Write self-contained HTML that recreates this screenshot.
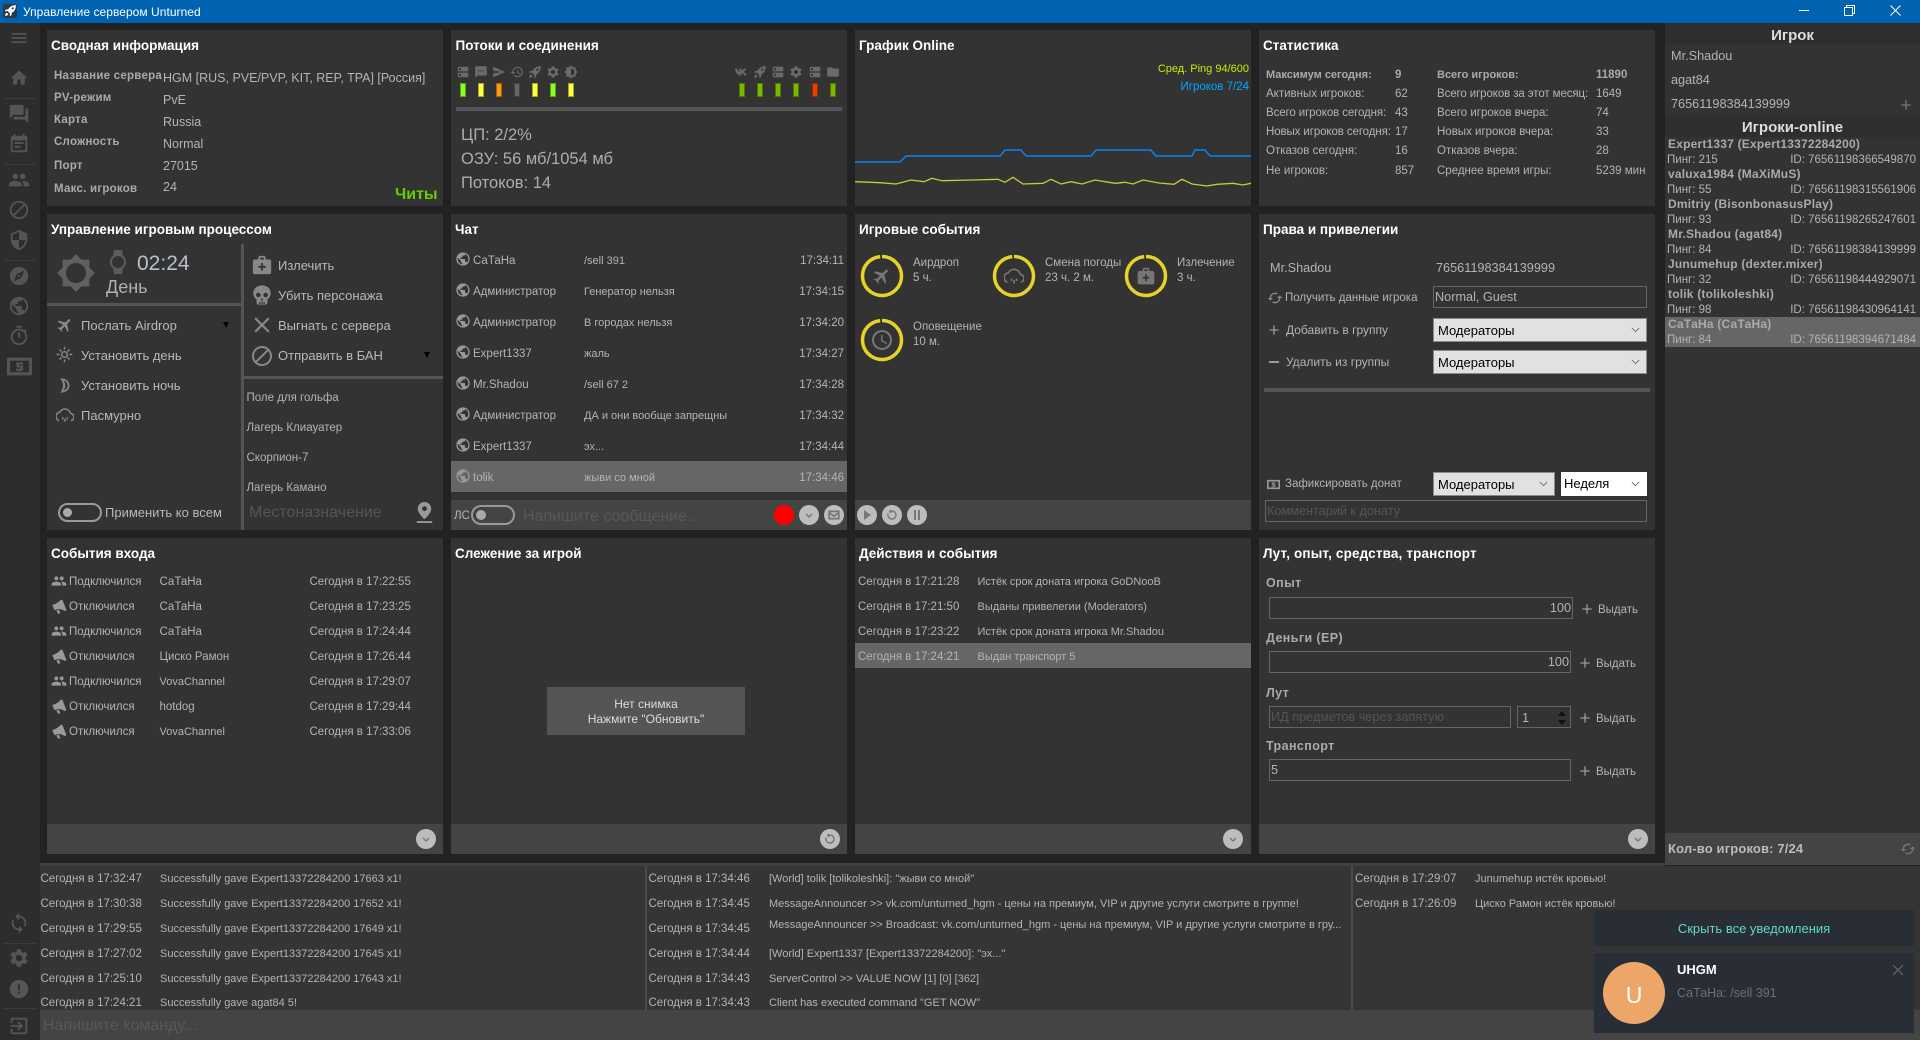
<!DOCTYPE html>
<html lang="ru"><head><meta charset="utf-8"><title>Управление сервером Unturned</title>
<style>
html,body{margin:0;padding:0;width:1920px;height:1040px;overflow:hidden;background:#222;font-family:"Liberation Sans","Noto Sans CJK SC",sans-serif;color:#b4b4b4}
p{position:absolute;margin:0;white-space:nowrap;line-height:16px;font-size:12px}
.b,.box,.i,.c{position:absolute}
.box{box-sizing:border-box}
.pn{position:absolute;background:#333}
.ti{font-size:13.5px;font-weight:bold;color:#fff}
.lb{font-weight:bold;font-size:11.5px;color:#aaa;letter-spacing:.25px}
.lb2{font-weight:bold;font-size:12.5px;color:#aaa;letter-spacing:.4px}
.v{font-size:12.7px;color:#b4b4b4}
.v2{font-size:12.5px;color:#b4b4b4}
.m{font-size:13px;color:#b8b8b8}
.s{font-size:11.5px;margin-top:1px}
.q{font-size:11px;margin-top:1px}
.lg .s{margin-top:0}
.lg .q{margin-top:0}
.inp{position:absolute;box-sizing:border-box;border:1px solid #666;height:22px}
.sel{position:absolute;box-sizing:border-box;background:#e1e1e1;border:1px solid #8a8a8a;height:24px;color:#000;font-size:13px;line-height:24px;padding-left:4px}
.sel svg{position:absolute;right:6px;top:8px;width:9px;height:6px;fill:none;stroke:#666;stroke-width:1}
.i{fill:#6a6a6a}
.sb{fill:#555}
.g{fill:#999}
.led{position:absolute;width:6px;height:14px;box-sizing:border-box;top:83px;border:1px solid rgba(0,0,0,.35)}
.ft{position:absolute;background:#444;height:30px}
.c{width:20px;height:20px;border-radius:50%;background:#bdbdbd;top:829px}
.c svg{position:absolute;left:5px;top:5px;width:10px;height:10px;fill:none;stroke:#777;stroke-width:1.4}
.sep{position:absolute;background:#555}
.sbs{position:absolute;left:5px;width:30px;height:1px;background:#3d3d3d}
.t14{width:14px;height:14px;top:65px}
</style></head><body>
<svg width="0" height="0" style="position:absolute"><defs>
<symbol id="menu" viewBox="0 0 24 24"><path d="M3 18h18v-2H3v2zm0-5h18v-2H3v2zm0-7v2h18V6H3z"/></symbol>
<symbol id="home" viewBox="0 0 24 24"><path d="M10 20v-6h4v6h5v-8h3L12 3 2 12h3v8z"/></symbol>
<symbol id="forum" viewBox="0 0 24 24"><path d="M21 6h-2v9H6v2c0 .55.45 1 1 1h11l4 4V7c0-.55-.45-1-1-1zm-4 6V3c0-.55-.45-1-1-1H3c-.55 0-1 .45-1 1v14l4-4h10c.55 0 1-.45 1-1z"/></symbol>
<symbol id="note" viewBox="0 0 24 24"><path d="M17 10H7v2h10v-2zm2-7h-1V1h-2v2H8V1H6v2H5c-1.11 0-2 .9-2 2v14c0 1.1.89 2 2 2h14c1.1 0 2-.9 2-2V5c0-1.1-.9-2-2-2zm0 16H5V8h14v11zm-5-5H7v2h7v-2z"/></symbol>
<symbol id="people" viewBox="0 0 24 24"><path d="M16 11c1.66 0 2.99-1.34 2.99-3S17.66 5 16 5c-1.66 0-3 1.34-3 3s1.34 3 3 3zm-8 0c1.66 0 2.99-1.34 2.99-3S9.66 5 8 5C6.34 5 5 6.34 5 8s1.34 3 3 3zm0 2c-2.33 0-7 1.17-7 3.5V19h14v-2.5c0-2.33-4.67-3.5-7-3.5zm8 0c-.29 0-.62.02-.97.05 1.16.84 1.97 1.97 1.97 3.45V19h6v-2.5c0-2.33-4.67-3.5-7-3.5z"/></symbol>
<symbol id="block" viewBox="0 0 24 24"><path d="M12 2C6.48 2 2 6.48 2 12s4.48 10 10 10 10-4.48 10-10S17.52 2 12 2zM4 12c0-4.42 3.58-8 8-8 1.85 0 3.55.63 4.9 1.69L5.69 16.9C4.63 15.55 4 13.85 4 12zm8 8c-1.85 0-3.55-.63-4.9-1.69L18.31 7.1C19.37 8.45 20 10.15 20 12c0 4.42-3.58 8-8 8z"/></symbol>
<symbol id="shield" viewBox="0 0 24 24"><path d="M12 1L3 5v6c0 5.55 3.84 10.74 9 12 5.16-1.26 9-6.45 9-12V5l-9-4zm0 10.99h7c-.53 4.12-3.28 7.79-7 8.94V12H5V6.3l7-3.11v8.8z"/></symbol>
<symbol id="explore" viewBox="0 0 24 24"><path d="M12 10.9c-.61 0-1.1.49-1.1 1.1s.49 1.1 1.1 1.1c.61 0 1.1-.49 1.1-1.1s-.49-1.1-1.1-1.1zM12 2C6.48 2 2 6.48 2 12s4.48 10 10 10 10-4.48 10-10S17.52 2 12 2zm2.19 12.19L6 18l3.81-8.19L18 6l-3.81 8.19z"/></symbol>
<symbol id="globe" viewBox="0 0 24 24"><path d="M12 2C6.48 2 2 6.48 2 12s4.48 10 10 10 10-4.48 10-10S17.52 2 12 2zm-1 17.93c-3.95-.49-7-3.85-7-7.93 0-.62.08-1.21.21-1.79L9 15v1c0 1.1.9 2 2 2v1.93zm6.9-2.54c-.26-.81-1-1.39-1.9-1.39h-1v-3c0-.55-.45-1-1-1H8v-2h2c.55 0 1-.45 1-1V7h2c1.1 0 2-.9 2-2v-.41c2.93 1.19 5 4.06 5 7.41 0 2.08-.8 3.97-2.1 5.39z"/></symbol>
<symbol id="timer" viewBox="0 0 24 24"><path d="M15 1H9v2h6V1zm-4 13h2V8h-2v6zm8.03-6.61l1.42-1.42c-.43-.51-.9-.99-1.41-1.41l-1.42 1.42C16.07 4.74 14.12 4 12 4c-4.97 0-9 4.03-9 9s4.02 9 9 9 9-4.03 9-9c0-2.12-.74-4.07-1.97-5.61zM12 20c-3.87 0-7-3.13-7-7s3.13-7 7-7 7 3.13 7 7-3.13 7-7 7z"/></symbol>
<symbol id="gear" viewBox="0 0 24 24"><path d="M19.14 12.94c.04-.3.06-.61.06-.94 0-.32-.02-.64-.07-.94l2.03-1.58c.18-.14.23-.41.12-.61l-1.92-3.32c-.12-.22-.37-.29-.59-.22l-2.39.96c-.5-.38-1.03-.7-1.62-.94l-.36-2.54c-.04-.24-.24-.41-.48-.41h-3.84c-.24 0-.43.17-.47.41l-.36 2.54c-.59.24-1.13.57-1.62.94l-2.39-.96c-.22-.08-.47 0-.59.22L2.74 8.87c-.12.21-.08.47.12.61l2.03 1.58c-.05.3-.09.63-.09.94s.02.64.07.94l-2.03 1.58c-.18.14-.23.41-.12.61l1.92 3.32c.12.22.37.29.59.22l2.39-.96c.5.38 1.03.7 1.62.94l.36 2.54c.05.24.24.41.48.41h3.84c.24 0 .44-.17.47-.41l.36-2.54c.59-.24 1.13-.56 1.62-.94l2.39.96c.22.08.47 0 .59-.22l1.92-3.32c.12-.22.07-.47-.12-.61l-2.01-1.58zM12 15.6c-1.98 0-3.6-1.62-3.6-3.6s1.62-3.6 3.6-3.6 3.6 1.62 3.6 3.6-1.62 3.6-3.6 3.6z"/></symbol>
<symbol id="flight" viewBox="0 0 24 24"><path transform="rotate(45 12 12)" d="M21 16v-2l-8-5V3.5c0-.83-.67-1.5-1.5-1.5S10 2.67 10 3.5V9l-8 5v2l8-2.5V19l-2 1.5V22l3.5-1 3.5 1v-1.5L13 19v-5.5l8 2.5z"/></symbol>
<symbol id="rocket" viewBox="0 0 24 24"><path d="M22 2c-7 0-11.5 3-14 7.5l-5 1-1.5 3 5-.5 4.5 4.500-.5 5 3-1.500 1-5C19 14 22 9 22 2zM16 6a2 2 0 110 4 2 2 0 010-4zM5 16c-2 1-3 3-3 6 3 0 5-1 6-3z"/></symbol>
<symbol id="send" viewBox="0 0 24 24"><path d="M2.010 21L23 12 2.010 3 2 10l15 2-15 2z"/></symbol>
<symbol id="sms" viewBox="0 0 24 24"><path d="M20 2H4c-1.100 0-1.990.9-1.990 2L2 22l4-4h14c1.100 0 2-.9 2-2V4c0-1.100-.9-2-2-2zM9 11H7V9h2v2zm4 0h-2V9h2v2zm4 0h-2V9h2v2z"/></symbol>
<symbol id="dns" viewBox="0 0 24 24"><path d="M20 13H4c-.55 0-1 .45-1 1v6c0 .55.45 1 1 1h16c.55 0 1-.45 1-1v-6c0-.55-.45-1-1-1zM7 19c-1.100 0-2-.9-2-2s.9-2 2-2 2 .9 2 2-.9 2-2 2zM20 3H4c-.55 0-1 .45-1 1v6c0 .55.45 1 1 1h16c.55 0 1-.45 1-1V4c0-.55-.45-1-1-1zM7 9c-1.100 0-2-.9-2-2s.9-2 2-2 2 .9 2 2-.9 2-2 2z"/></symbol>
<symbol id="hist" viewBox="0 0 24 24"><path d="M13 3c-4.970 0-9 4.030-9 9H1l3.890 3.890.07.14L9 12H6c0-3.870 3.130-7 7-7s7 3.130 7 7-3.130 7-7 7c-1.930 0-3.680-.79-4.940-2.060l-1.420 1.420C8.270 19.990 10.510 21 13 21c4.970 0 9-4.030 9-9s-4.030-9-9-9zm-1 5v5l4.280 2.540.72-1.210-3.500-2.080V8H12z"/></symbol>
<symbol id="half" viewBox="0 0 24 24"><path d="M20 8.690V4h-4.690L12 .69 8.690 4H4v4.690L.69 12 4 15.310V20h4.690L12 23.310 15.310 20H20v-4.690L23.310 12 20 8.690zM12 18V6c3.310 0 6 2.690 6 6s-2.690 6-6 6z"/></symbol>
<symbol id="sun" viewBox="0 0 24 24"><path d="M20 15.310L23.310 12 20 8.690V4h-4.690L12 .69 8.690 4H4v4.690L.69 12 4 15.310V20h4.690L12 23.310 15.310 20H20v-4.690zM12 18c-3.310 0-6-2.690-6-6s2.690-6 6-6 6 2.690 6 6-2.690 6-6 6z"/></symbol>
<symbol id="watch" viewBox="0 0 24 24"><path d="M20 12c0-2.540-1.190-4.810-3.040-6.270L16 0H8l-.95 5.730C5.190 7.190 4 9.450 4 12s1.190 4.810 3.050 6.270L8 24h8l.96-5.730C18.810 16.810 20 14.540 20 12zM6 12c0-3.310 2.690-6 6-6s6 2.690 6 6-2.690 6-6 6-6-2.690-6-6z"/></symbol>
<symbol id="med" viewBox="0 0 24 24"><path d="M20 6h-4V4c0-1.100-.9-2-2-2h-4c-1.100 0-2 .9-2 2v2H4c-1.100 0-2 .9-2 2v12c0 1.100.9 2 2 2h16c1.100 0 2-.9 2-2V8c0-1.100-.9-2-2-2zM10 4h4v2h-4V4zm6 11h-3v3h-2v-3H8v-2h3v-3h2v3h3v2z"/></symbol>
<symbol id="skull" viewBox="0 0 24 24"><path fill-rule="evenodd" d="M12 1.500C6.500 1.500 2.500 5 2.500 10c0 3 1.300 5.300 3.500 6.700V20c0 1.300 1 2.500 2.300 2.500h7.400c1.300 0 2.300-1.200 2.300-2.500v-3.300c2.200-1.400 3.500-3.700 3.500-6.700 0-5-4-8.500-9.500-8.500zM8 9.500a2.500 2.500 0 110 5 2.500 2.500 0 010-5zm8 0a2.500 2.500 0 110 5 2.500 2.500 0 010-5zM12 15l1.500 3h-3zM9 19.500h1.300V22H9zm2.300 0h1.400V22h-1.400zm2.400 0H15V22h-1.300z"/></symbol>
<symbol id="x" viewBox="0 0 24 24"><path d="M19 6.410L17.590 5 12 10.590 6.410 5 5 6.410 10.590 12 5 17.590 6.410 19 12 13.410 17.590 19 19 17.590 13.410 12z"/></symbol>
<symbol id="brsun" viewBox="0 0 24 24"><path d="M12 7a5 5 0 100 10 5 5 0 000-10zm0 2a3 3 0 110 6 3 3 0 010-6zM11 1h2v4h-2zM11 19h2v4h-2zM1 11h4v2H1zM19 11h4v2h-4zM4.200 5.600l1.400-1.400 2.800 2.800-1.400 1.400zM15.600 17l1.400-1.400 2.800 2.800-1.400 1.400zM4.200 18.400L7 15.600 8.400 17l-2.800 2.800zM15.600 7l2.800-2.800 1.400 1.400L17 8.400z"/></symbol>
<symbol id="moon" viewBox="0 0 24 24"><path fill-rule="evenodd" d="M6 2c8 0 13 4 13 10s-5 10-13 10c2.500-3 4-6.500 4-10S8.500 5 6 2zm4.500 3c1.600 2 2.500 4.500 2.500 7s-.9 5-2.500 7c3.800-.8 6-3.600 6-7s-2.200-6.200-6-7z"/></symbol>
<symbol id="cloud" viewBox="0 0 24 24"><path fill="none" stroke-width="2" d="M19.350 10.040C18.670 6.590 15.640 4 12 4 9.110 4 6.600 5.640 5.350 8.040 2.340 8.360 0 10.910 0 14c0 2.500 1.500 4.500 4 5.500M20 19.500c2.500-.8 4-2.500 4-4.500 0-2.640-2.050-4.780-4.650-4.960" stroke="currentColor"/><path d="M8 15h2v3H8zM11 17h2v4h-2zM14 15h2v3h-2z"/></symbol>
<symbol id="pin" viewBox="0 0 24 24"><path d="M12 1C8.130 1 5 4.130 5 8c0 5.250 7 11 7 11s7-5.750 7-11c0-3.870-3.130-7-7-7zm0 9.500c-1.380 0-2.500-1.120-2.500-2.500s1.120-2.500 2.500-2.500 2.500 1.120 2.500 2.500-1.120 2.500-2.500 2.500zM4 21h16v2H4z"/></symbol>
<symbol id="mega" viewBox="0 0 24 24"><path d="M15.500 1l1.500 1 6 15.500-1 1.500-2.500-.2c-4-2.800-9-3.300-13-1.800l-2.500 1-3.500-8 2-1c4-1.500 9-4.500 11-7.500zM7 18.500l4-1.500 2.300 5.500-3.300 1.300z"/></symbol>
<symbol id="cached" viewBox="0 0 24 24"><path d="M19 8l-4 4h3c0 3.310-2.690 6-6 6-1.010 0-1.970-.25-2.800-.7l-1.460 1.460C8.970 19.540 10.430 20 12 20c4.420 0 8-3.580 8-8h3l-4-4zM6 12c0-3.310 2.690-6 6-6 1.010 0 1.970.25 2.800.7l1.460-1.460C15.030 4.460 13.570 4 12 4c-4.420 0-8 3.580-8 8H1l4 4 4-4H6z"/></symbol>
<symbol id="sync" viewBox="0 0 24 24"><path d="M12 4V1L8 5l4 4V6c3.310 0 6 2.690 6 6 0 1.010-.25 1.970-.7 2.800l1.460 1.460C19.540 15.030 20 13.570 20 12c0-4.420-3.580-8-8-8zm0 14c-3.310 0-6-2.690-6-6 0-1.010.25-1.970.7-2.800L5.240 7.740C4.460 8.970 4 10.430 4 12c0 4.420 3.580 8 8 8v3l4-4-4-4v3z"/></symbol>
<symbol id="err" viewBox="0 0 24 24"><path d="M12 2C6.480 2 2 6.480 2 12s4.480 10 10 10 10-4.480 10-10S17.520 2 12 2zm1 15h-2v-2h2v2zm0-4h-2V7h2v6z"/></symbol>
<symbol id="exit" viewBox="0 0 24 24"><path d="M10.090 15.590L11.500 17l5-5-5-5-1.410 1.410L12.670 11H3v2h9.670l-2.580 2.590zM19 3H5c-1.110 0-2 .9-2 2v4h2V5h14v14H5v-4H3v4c0 1.100.89 2 2 2h14c1.100 0 2-.9 2-2V5c0-1.100-.9-2-2-2z"/></symbol>
<symbol id="vk" viewBox="0 0 24 24"><path d="M0 6h4c.6 3.500 2 5.500 3.500 6V6h3.500v4c1.400-.3 3-2 4-4h3.700c-.7 2.500-2.300 4.500-3.700 5.600 1.500.9 3.500 2.900 4.600 6.400h-4c-.8-2.400-2.600-4-4.600-4.300V18h-1C5 18 1 13.500 0 6z"/></symbol>
<symbol id="folder" viewBox="0 0 24 24"><path d="M10 4H4c-1.100 0-1.990.9-1.990 2L2 18c0 1.100.9 2 2 2h16c1.100 0 2-.9 2-2V8c0-1.100-.9-2-2-2h-8l-2-2z"/></symbol>
<symbol id="clock" viewBox="0 0 24 24"><path d="M11.990 2C6.470 2 2 6.480 2 12s4.470 10 9.990 10C17.520 22 22 17.520 22 12S17.520 2 11.990 2zM12 20c-4.420 0-8-3.580-8-8s3.580-8 8-8 8 3.580 8 8-3.580 8-8 8zm.5-13H11v6l5.250 3.150.75-1.230-4.500-2.670z"/></symbol>
<symbol id="plus" viewBox="0 0 24 24"><path d="M19 13h-6v6h-2v-6H5v-2h6V5h2v6h6v2z"/></symbol>
<symbol id="money" viewBox="0 0 24 24"><path fill-rule="evenodd" d="M1 3.500c-.6 0-1 .4-1 1v15c0 .6.4 1 1 1h22c.6 0 1-.4 1-1v-15c0-.6-.4-1-1-1zM3 6.500h18v11H3zM9 8h6.500v2H11.500v1.200h4V16H12.700v1.200h-1.500V16H8.500v-2h4.500v-1.200H9z"/></symbol>
</defs></svg>

<!-- title bar -->
<div class="b" style="left:0;top:0;width:1920px;height:23px;background:#0063b1"></div>
<div class="b" style="left:3px;top:4px;width:14px;height:14px;background:#2a3a48;border-radius:2px"></div>
<svg class="i" style="left:4px;top:4px;width:13px;height:13px;fill:#fff"><use href="#rocket"/></svg>
<p style="left:23px;top:4px;font-size:12px;color:#fff;letter-spacing:.04px">Управление сервером Unturned</p>
<div class="b" style="left:1799px;top:10px;width:10px;height:1px;background:#fff"></div>
<svg class="b" style="left:1844px;top:5px" width="11" height="11" fill="none" stroke="#fff"><path d="M.5 2.500h8v8h-8zM2.500 2.500v-2h8v8h-2"/></svg>
<svg class="b" style="left:1890px;top:5px" width="11" height="11" stroke="#fff"><path d="M.5.5l10 10M10.500.5l-10 10"/></svg>

<!-- sidebar -->
<div class="b" style="left:0;top:23px;width:40px;height:1017px;background:#2d2d2d"></div>
<svg class="i sb" style="left:9px;top:28px;width:20px;height:20px"><use href="#menu"/></svg>
<svg class="i sb" style="left:9px;top:68px;width:20px;height:20px"><use href="#home"/></svg>
<div class="sbs" style="top:98px"></div>
<svg class="i sb" style="left:8px;top:103px;width:22px;height:22px"><use href="#forum"/></svg>
<svg class="i sb" style="left:8px;top:133px;width:22px;height:22px"><use href="#note"/></svg>
<div class="sbs" style="top:164px"></div>
<svg class="i sb" style="left:8px;top:169px;width:22px;height:22px"><use href="#people"/></svg>
<svg class="i sb" style="left:8px;top:199px;width:22px;height:22px"><use href="#block"/></svg>
<svg class="i sb" style="left:8px;top:229px;width:22px;height:22px"><use href="#shield"/></svg>
<div class="sbs" style="top:260px"></div>
<svg class="i sb" style="left:8px;top:265px;width:22px;height:22px"><use href="#explore"/></svg>
<svg class="i sb" style="left:8px;top:295px;width:22px;height:22px"><use href="#globe"/></svg>
<svg class="i sb" style="left:8px;top:325px;width:22px;height:22px"><use href="#timer"/></svg>
<svg class="i sb" style="left:7px;top:354px;width:25px;height:25px"><use href="#money"/></svg>
<svg class="i sb" style="left:8px;top:912px;width:22px;height:22px"><use href="#sync"/></svg>
<div class="sbs" style="top:943px"></div>
<svg class="i sb" style="left:8px;top:947px;width:22px;height:22px"><use href="#gear"/></svg>
<svg class="i sb" style="left:8px;top:978px;width:22px;height:22px"><use href="#err"/></svg>
<div class="sbs" style="top:1008px"></div>
<svg class="i sb" style="left:8px;top:1015px;width:22px;height:22px"><use href="#exit"/></svg>

<!-- panels -->
<div class="pn" style="left:47px;top:30px;width:396px;height:176px"></div>
<div class="pn" style="left:451px;top:30px;width:396px;height:176px"></div>
<div class="pn" style="left:855px;top:30px;width:396px;height:176px"></div>
<div class="pn" style="left:1259px;top:30px;width:396px;height:176px"></div>
<div class="pn" style="left:47px;top:214px;width:396px;height:316px"></div>
<div class="pn" style="left:451px;top:214px;width:396px;height:316px"></div>
<div class="pn" style="left:855px;top:214px;width:396px;height:316px"></div>
<div class="pn" style="left:1259px;top:214px;width:396px;height:316px"></div>
<div class="pn" style="left:47px;top:538px;width:396px;height:316px"></div>
<div class="pn" style="left:451px;top:538px;width:396px;height:316px"></div>
<div class="pn" style="left:855px;top:538px;width:396px;height:316px"></div>
<div class="pn" style="left:1259px;top:538px;width:396px;height:316px"></div>

<!-- Summary -->
<p class="ti" style="left:51px;top:38px">Сводная информация</p>
<p class="lb" style="left:54px;top:68px">Название сервера</p><p class="v2" style="left:163px;top:70px">HGM [RUS, PVE/PVP, KIT, REP, TPA] [Россия]</p>
<p class="lb" style="left:54px;top:90px">PV-режим</p><p class="v2" style="left:163px;top:92px">PvE</p>
<p class="lb" style="left:54px;top:112px">Карта</p><p class="v2" style="left:163px;top:114px">Russia</p>
<p class="lb" style="left:54px;top:134px">Сложность</p><p class="v2" style="left:163px;top:136px">Normal</p>
<p class="lb" style="left:54px;top:158px">Порт</p><p class="v2" style="left:163px;top:158px">27015</p>
<p class="lb" style="left:54px;top:181px">Макс. игроков</p><p class="v2" style="left:163px;top:179px">24</p>
<p style="left:395px;top:187px;font-size:16px;font-weight:bold;color:#66cc00">Читы</p>

<!-- Threads -->
<p class="ti" style="left:455.500px;top:38px">Потоки и соединения</p>
<svg class="i t14" style="left:456px"><use href="#dns"/></svg>
<svg class="i t14" style="left:474px"><use href="#sms"/></svg>
<svg class="i t14" style="left:492px"><use href="#send"/></svg>
<svg class="i t14" style="left:510px"><use href="#hist"/></svg>
<svg class="i t14" style="left:528px"><use href="#rocket"/></svg>
<svg class="i t14" style="left:546px"><use href="#gear"/></svg>
<svg class="i t14" style="left:564px"><use href="#half"/></svg>
<svg class="i t14" style="left:735px"><use href="#vk"/></svg>
<svg class="i t14" style="left:753px"><use href="#rocket"/></svg>
<svg class="i t14" style="left:771px"><use href="#dns"/></svg>
<svg class="i t14" style="left:789px"><use href="#gear"/></svg>
<svg class="i t14" style="left:808px"><use href="#dns"/></svg>
<svg class="i t14" style="left:826px"><use href="#folder"/></svg>
<div class="led" style="left:460px;background:#88ff22"></div><div class="led" style="left:478px;background:#ffff44"></div><div class="led" style="left:496px;background:#ff9911"></div><div class="led" style="left:514px;background:#666"></div><div class="led" style="left:532px;background:#ffff44"></div><div class="led" style="left:550px;background:#88ff22"></div><div class="led" style="left:568px;background:#ffff44"></div>
<div class="led" style="left:739px;background:#7ab800"></div><div class="led" style="left:757px;background:#7ab800"></div><div class="led" style="left:775px;background:#7ab800"></div><div class="led" style="left:793px;background:#7ab800"></div><div class="led" style="left:812px;background:#e84000"></div><div class="led" style="left:830px;background:#7ab800"></div>
<div class="sep" style="left:456px;top:107px;width:386px;height:4px"></div>
<p style="left:461px;top:127px;font-size:16.500px;line-height:17px;color:#adadad">ЦП: 2/2%</p>
<p style="left:461px;top:151px;font-size:16.500px;line-height:17px;color:#adadad">ОЗУ: 56 мб/1054 мб</p>
<p style="left:461px;top:175px;font-size:16.500px;line-height:17px;color:#adadad">Потоков: 14</p>

<!-- Graph -->
<p class="ti" style="left:859px;top:38px">График Online</p>
<p style="right:671px;top:61px;font-size:11px;color:#c0f000">Сред. Ping 94/600</p>
<p style="right:671px;top:79px;font-size:11.5px;color:#00a8ff">Игроков 7/24</p>
<svg class="b" style="left:855px;top:130px" width="396" height="70" fill="none">
<path stroke="#0a82f5" stroke-width="1.500" d="M0 32H45L51 26H145L150 20H166L171 26H236L241 20H296L301 26H337L340 20H350L355 26H396"/>
<path stroke="#c9c93a" stroke-width="1.300" d="M0 51.700L25 52.700L41 54L56 50L69 51.700L77 48.300L87 50.700L117 50L143 49.300L150 52.300L158 47.300L168 54L188 53.300L196 49.300L206 54L216 51.700L227 54L240 50L260 53.300L270 52.300L278 54L288 50L304 53L319 54.300L327 49.300L337 54L352 56L362 54.300L378 53.300L388 55L396 53.300"/>
</svg>

<!-- Stats -->
<p class="ti" style="left:1263px;top:38px">Статистика</p>
<p class="s" style="left:1266px;top:66px;font-weight:bold;color:#aaa;font-size:11px">Максимум сегодня:</p><p class="s" style="left:1395px;top:66px;font-weight:bold;color:#aaa">9</p><p class="s" style="left:1437px;top:66px;font-weight:bold;color:#aaa;font-size:11px">Всего игроков:</p><p class="s" style="left:1596px;top:66px;font-weight:bold;color:#aaa">11890</p>
<p class="s" style="left:1266px;top:85px">Активных игроков:</p><p class="s" style="left:1395px;top:85px">62</p><p class="s" style="left:1437px;top:85px;letter-spacing:-.1px">Всего игроков за этот месяц:</p><p class="s" style="left:1596px;top:85px">1649</p>
<p class="s" style="left:1266px;top:104px;letter-spacing:-.1px">Всего игроков сегодня:</p><p class="s" style="left:1395px;top:104px">43</p><p class="s" style="left:1437px;top:104px">Всего игроков вчера:</p><p class="s" style="left:1596px;top:104px">74</p>
<p class="s" style="left:1266px;top:123px;letter-spacing:-.1px">Новых игроков сегодня:</p><p class="s" style="left:1395px;top:123px">17</p><p class="s" style="left:1437px;top:123px">Новых игроков вчера:</p><p class="s" style="left:1596px;top:123px">33</p>
<p class="s" style="left:1266px;top:142px">Отказов сегодня:</p><p class="s" style="left:1395px;top:142px">16</p><p class="s" style="left:1437px;top:142px">Отказов вчера:</p><p class="s" style="left:1596px;top:142px">28</p>
<p class="s" style="left:1266px;top:162px">Не игроков:</p><p class="s" style="left:1395px;top:162px">857</p><p class="s" style="left:1437px;top:162px">Среднее время игры:</p><p class="s" style="left:1596px;top:162px">5239 мин</p>

<!-- Game control -->
<p class="ti" style="left:51px;top:222px">Управление игровым процессом</p>
<div class="sep" style="left:241px;top:244px;width:3px;height:286px"></div>
<div class="sep" style="left:47px;top:303px;width:194px;height:3px"></div>
<div class="sep" style="left:244px;top:376px;width:199px;height:3px"></div>
<svg class="i" style="left:56px;top:253px;width:40px;height:40px;fill:#606060"><use href="#sun"/></svg>
<svg class="i" style="left:106px;top:250px;width:24px;height:24px;fill:#5c5c5c"><use href="#watch"/></svg>
<p style="left:137px;top:252px;font-size:21px;line-height:24px;color:#b8c0c8">02:24</p>
<p style="left:106px;top:277px;font-size:18px;line-height:20px;color:#b0b0b0">День</p>
<svg class="i" style="left:56px;top:316px;width:18px;height:18px;fill:#888"><use href="#flight"/></svg>
<svg class="i" style="left:56px;top:346px;width:17px;height:17px;fill:#888"><use href="#brsun"/></svg>
<svg class="i" style="left:56px;top:377px;width:17px;height:17px;fill:#888"><use href="#moon"/></svg>
<svg class="i" style="left:56px;top:406px;width:18px;height:18px;fill:#888;color:#888"><use href="#cloud"/></svg>
<p class="m" style="left:81px;top:318px">Послать Airdrop</p>
<p class="m" style="left:81px;top:348px">Установить день</p>
<p class="m" style="left:81px;top:378px">Установить ночь</p>
<p class="m" style="left:81px;top:408px">Пасмурно</p>
<div class="b" style="left:223px;top:322px;border-left:3.500px solid transparent;border-right:3.500px solid transparent;border-top:6px solid #000"></div>
<svg class="i" style="left:251px;top:254px;width:22px;height:22px;fill:#888"><use href="#med"/></svg>
<svg class="i" style="left:251px;top:284px;width:22px;height:22px;fill:#888"><use href="#skull"/></svg>
<svg class="i" style="left:249px;top:312px;width:26px;height:26px;fill:#888"><use href="#x"/></svg>
<svg class="i" style="left:250px;top:344px;width:24px;height:24px;fill:#888"><use href="#block"/></svg>
<p class="m" style="left:278px;top:258px">Излечить</p>
<p class="m" style="left:278px;top:288px">Убить персонажа</p>
<p class="m" style="left:278px;top:318px">Выгнать с сервера</p>
<p class="m" style="left:278px;top:348px">Отправить в БАН</p>
<div class="b" style="left:424px;top:352px;border-left:3.500px solid transparent;border-right:3.500px solid transparent;border-top:6px solid #000"></div>
<p class="s" style="left:246.500px;top:389px">Поле для гольфа</p>
<p class="s" style="left:246.500px;top:419px">Лагерь Клиауатер</p>
<p class="s" style="left:246.500px;top:449px">Скорпион-7</p>
<p class="s" style="left:246.500px;top:479px">Лагерь Камано</p>
<p style="left:249px;top:505px;font-size:16px;color:#555">Местоназначение</p>
<svg class="i" style="left:413px;top:501px;width:23px;height:23px;fill:#999"><use href="#pin"/></svg>
<div class="box" style="left:58px;top:503px;width:44px;height:19px;border:2px solid #999;border-radius:10px"></div>
<div class="b" style="left:63px;top:508px;width:9px;height:9px;border-radius:50%;background:#aaa"></div>
<p class="m" style="left:105px;top:505px">Применить ко всем</p>

<!-- Chat -->
<p class="ti" style="left:455px;top:222px">Чат</p>
<div class="b" style="left:451px;top:461px;width:396px;height:31px;background:#666"></div>
<svg class="i g" style="left:455px;top:251px;width:16px;height:16px"><use href="#globe"/></svg><p class="s" style="left:473px;top:252px">СаТаНа</p><p class="q" style="left:584px;top:252px">/sell 391</p><p class="s" style="right:1076px;top:252px">17:34:11</p>
<svg class="i g" style="left:455px;top:282px;width:16px;height:16px"><use href="#globe"/></svg><p class="s" style="left:473px;top:283px">Администратор</p><p class="q" style="left:584px;top:283px">Генератор нельзя</p><p class="s" style="right:1076px;top:283px">17:34:15</p>
<svg class="i g" style="left:455px;top:313px;width:16px;height:16px"><use href="#globe"/></svg><p class="s" style="left:473px;top:314px">Администратор</p><p class="q" style="left:584px;top:314px">В городах нельзя</p><p class="s" style="right:1076px;top:314px">17:34:20</p>
<svg class="i g" style="left:455px;top:344px;width:16px;height:16px"><use href="#globe"/></svg><p class="s" style="left:473px;top:345px">Expert1337</p><p class="q" style="left:584px;top:345px">жаль</p><p class="s" style="right:1076px;top:345px">17:34:27</p>
<svg class="i g" style="left:455px;top:375px;width:16px;height:16px"><use href="#globe"/></svg><p class="s" style="left:473px;top:376px">Mr.Shadou</p><p class="q" style="left:584px;top:376px">/sell 67 2</p><p class="s" style="right:1076px;top:376px">17:34:28</p>
<svg class="i g" style="left:455px;top:406px;width:16px;height:16px"><use href="#globe"/></svg><p class="s" style="left:473px;top:407px">Администратор</p><p class="q" style="left:584px;top:407px">ДА и они вообще запрещны</p><p class="s" style="right:1076px;top:407px">17:34:32</p>
<svg class="i g" style="left:455px;top:437px;width:16px;height:16px"><use href="#globe"/></svg><p class="s" style="left:473px;top:438px">Expert1337</p><p class="q" style="left:584px;top:438px">эх...</p><p class="s" style="right:1076px;top:438px">17:34:44</p>
<svg class="i g" style="left:455px;top:468px;width:16px;height:16px"><use href="#globe"/></svg><p class="s" style="left:473px;top:469px">tolik</p><p class="q" style="left:584px;top:469px">жыви со мной</p><p class="s" style="right:1076px;top:469px">17:34:46</p>
<div class="ft" style="left:451px;top:500px;width:396px"></div>
<p class="s" style="left:454px;top:507px">ЛС</p>
<div class="box" style="left:471px;top:505px;width:44px;height:20px;border:2px solid #999;border-radius:10px"></div>
<div class="b" style="left:476px;top:510px;width:10px;height:10px;border-radius:50%;background:#aaa"></div>
<p style="left:523px;top:509px;font-size:16px;color:#585858">Напишите сообщение...</p>
<div class="c" style="left:774px;top:505px;background:#f00"></div>
<div class="c" style="left:799px;top:505px"><svg viewBox="0 0 10 10"><path d="M2 4l3 3 3-3"/></svg></div>
<div class="c" style="left:824px;top:505px"><svg viewBox="0 0 10 10" style="left:4px;top:4px;width:12px;height:12px"><path d="M1 2h8v6H1zM1 3l4 3 4-3"/></svg></div>

<!-- Game events -->
<p class="ti" style="left:859px;top:222px">Игровые события</p>
<svg class="b" style="left:860px;top:254px" width="310" height="110" fill="none" stroke="#e6d228" stroke-width="3.500" stroke-dasharray="120.500 2"><circle cx="22" cy="22" r="19.500" transform="rotate(-90 22 22)"/><circle cx="154" cy="22" r="19.500" transform="rotate(-90 154 22)"/><circle cx="286" cy="22" r="19.500" transform="rotate(-90 286 22)"/><circle cx="22" cy="86" r="19.500" transform="rotate(-90 22 86)"/></svg>
<svg class="i" style="left:872px;top:266px;width:20px;height:20px;fill:#777"><use href="#flight"/></svg>
<svg class="i" style="left:1004px;top:266px;width:20px;height:20px;fill:#777;color:#777"><use href="#cloud"/></svg>
<svg class="i" style="left:1136px;top:266px;width:20px;height:20px;fill:#777"><use href="#med"/></svg>
<svg class="i" style="left:870px;top:328px;width:24px;height:24px;fill:#777"><use href="#clock"/></svg>
<p class="s" style="left:913px;top:254px">Аирдроп</p><p class="s" style="left:913px;top:269px">5 ч.</p>
<p class="s" style="left:1045px;top:254px">Смена погоды</p><p class="s" style="left:1045px;top:269px">23 ч. 2 м.</p>
<p class="s" style="left:1177px;top:254px">Излечение</p><p class="s" style="left:1177px;top:269px">3 ч.</p>
<p class="s" style="left:913px;top:318px">Оповещение</p><p class="s" style="left:913px;top:333px">10 м.</p>
<div class="ft" style="left:855px;top:500px;width:396px"></div>
<div class="c" style="left:857px;top:505px"><svg viewBox="0 0 10 10" style="fill:#777;stroke:none"><path d="M2 0l7 5-7 5z"/></svg></div>
<div class="c" style="left:882px;top:505px"><svg viewBox="0 0 10 10"><path d="M3 1.500A4 4 0 115 9 4 4 0 011.200 3.500M3 0v2h2"/></svg></div>
<div class="c" style="left:907px;top:505px"><svg viewBox="0 0 10 10" style="fill:#777;stroke:none"><path d="M2 0h2v10H2zM6 0h2v10H6z"/></svg></div>

<!-- Rights -->
<p class="ti" style="left:1263px;top:222px">Права и привелегии</p>
<p class="v" style="left:1270px;top:260px">Mr.Shadou</p><p class="v" style="left:1436px;top:260px">76561198384139999</p>
<svg class="i g" style="left:1267px;top:290px;width:16px;height:16px;fill:#888"><use href="#cached"/></svg>
<p class="s" style="left:1285px;top:289px">Получить данные игрока</p>
<div class="inp" style="left:1433px;top:286px;width:214px"></div><p class="v" style="left:1435px;top:289px">Normal, Guest</p>
<svg class="i g" style="left:1266px;top:322px;width:16px;height:16px;fill:#999"><use href="#plus"/></svg>
<p style="left:1286px;top:322px;font-size:12px">Добавить в группу</p>
<div class="sel" style="left:1433px;top:318px;width:214px">Модераторы<svg viewBox="0 0 11 7"><path d="M1 1l4.500 4.500L10 1"/></svg></div>
<div class="b" style="left:1269px;top:361px;width:10px;height:2px;background:#999"></div>
<p style="left:1286px;top:354px;font-size:12px">Удалить из группы</p>
<div class="sel" style="left:1433px;top:350px;width:214px">Модераторы<svg viewBox="0 0 11 7"><path d="M1 1l4.500 4.500L10 1"/></svg></div>
<div class="sep" style="left:1264px;top:388px;width:386px;height:4px"></div>
<svg class="i" style="left:1267px;top:478px;width:13px;height:13px;fill:#999"><use href="#money"/></svg>
<p class="s" style="left:1285px;top:475px">Зафиксировать донат</p>
<div class="sel" style="left:1433px;top:472px;width:122px">Модераторы<svg viewBox="0 0 11 7"><path d="M1 1l4.500 4.500L10 1"/></svg></div>
<div class="sel" style="left:1561px;top:472px;width:86px;background:#fff;border-color:#fff;line-height:21px;padding-left:2px">Неделя<svg viewBox="0 0 11 7"><path d="M1 1l4.500 4.500L10 1"/></svg></div>
<div class="inp" style="left:1265px;top:500px;width:382px"></div><p class="v" style="left:1267px;top:503px;color:#555">Комментарий к донату</p>

<!-- Login events -->
<p class="ti" style="left:51px;top:546px">События входа</p>
<svg class="i g" style="left:51px;top:573px;width:16px;height:16px"><use href="#people"/></svg><p class="s" style="left:69px;top:573px">Подключился</p><p class="s" style="left:159.500px;top:573px">СаТаНа</p><p class="s" style="left:309.500px;top:573px">Сегодня в 17:22:55</p>
<svg class="i g" style="left:52px;top:599px;width:15px;height:15px"><use href="#mega"/></svg><p class="s" style="left:69px;top:598px">Отключился</p><p class="s" style="left:159.500px;top:598px">СаТаНа</p><p class="s" style="left:309.500px;top:598px">Сегодня в 17:23:25</p>
<svg class="i g" style="left:51px;top:623px;width:16px;height:16px"><use href="#people"/></svg><p class="s" style="left:69px;top:623px">Подключился</p><p class="s" style="left:159.500px;top:623px">СаТаНа</p><p class="s" style="left:309.500px;top:623px">Сегодня в 17:24:44</p>
<svg class="i g" style="left:52px;top:649px;width:15px;height:15px"><use href="#mega"/></svg><p class="s" style="left:69px;top:648px">Отключился</p><p class="s" style="left:159.500px;top:648px">Циско Рамон</p><p class="s" style="left:309.500px;top:648px">Сегодня в 17:26:44</p>
<svg class="i g" style="left:51px;top:673px;width:16px;height:16px"><use href="#people"/></svg><p class="s" style="left:69px;top:673px">Подключился</p><p class="q" style="left:159.500px;top:673px">VovaChannel</p><p class="s" style="left:309.500px;top:673px">Сегодня в 17:29:07</p>
<svg class="i g" style="left:52px;top:699px;width:15px;height:15px"><use href="#mega"/></svg><p class="s" style="left:69px;top:698px">Отключился</p><p class="s" style="left:159.500px;top:698px">hotdog</p><p class="s" style="left:309.500px;top:698px">Сегодня в 17:29:44</p>
<svg class="i g" style="left:52px;top:724px;width:15px;height:15px"><use href="#mega"/></svg><p class="s" style="left:69px;top:723px">Отключился</p><p class="q" style="left:159.500px;top:723px">VovaChannel</p><p class="s" style="left:309.500px;top:723px">Сегодня в 17:33:06</p>
<div class="ft" style="left:47px;top:824px;width:396px"></div>
<div class="c" style="left:416px"><svg viewBox="0 0 10 10"><path d="M2 4l3 3 3-3"/></svg></div>

<!-- Tracking -->
<p class="ti" style="left:455px;top:546px">Слежение за игрой</p>
<div class="b" style="left:547px;top:687px;width:198px;height:48px;background:#555"></div>
<p style="left:547px;width:198px;text-align:center;top:696px;font-size:12px;color:#ddd">Нет снимка</p>
<p style="left:547px;width:198px;text-align:center;top:711px;font-size:12px;color:#ddd">Нажмите "Обновить"</p>
<div class="ft" style="left:451px;top:824px;width:396px"></div>
<div class="c" style="left:820px"><svg viewBox="0 0 10 10"><path d="M3 1.500A4 4 0 115 9 4 4 0 011.200 3.500M3 0v2h2"/></svg></div>

<!-- Actions -->
<p class="ti" style="left:859px;top:546px">Действия и события</p>
<div class="b" style="left:855px;top:643px;width:396px;height:25px;background:#666"></div>
<p class="s" style="left:858px;top:573px">Сегодня в 17:21:28</p><p class="q" style="left:977.500px;top:573px">Истёк срок доната игрока GoDNooB</p>
<p class="s" style="left:858px;top:598px">Сегодня в 17:21:50</p><p class="q" style="left:977.500px;top:598px">Выданы привелегии (Moderators)</p>
<p class="s" style="left:858px;top:623px">Сегодня в 17:23:22</p><p class="q" style="left:977.500px;top:623px">Истёк срок доната игрока Mr.Shadou</p>
<p class="s" style="left:858px;top:648px">Сегодня в 17:24:21</p><p class="q" style="left:977.500px;top:648px">Выдан транспорт 5</p>
<div class="ft" style="left:855px;top:824px;width:396px"></div>
<div class="c" style="left:1223px"><svg viewBox="0 0 10 10"><path d="M2 4l3 3 3-3"/></svg></div>

<!-- Loot -->
<p class="ti" style="left:1263px;top:546px;letter-spacing:.15px">Лут, опыт, средства, транспорт</p>
<p class="lb2" style="left:1266px;top:575px">Опыт</p>
<div class="inp" style="left:1269px;top:597px;width:304px"></div><p class="v" style="right:349px;top:600px">100</p>
<svg class="i g" style="left:1579px;top:601px;width:16px;height:16px;fill:#999"><use href="#plus"/></svg><p class="s" style="left:1598px;top:601px">Выдать</p>
<p class="lb2" style="left:1266px;top:630px">Деньги (ЕР)</p>
<div class="inp" style="left:1269px;top:651px;width:302px"></div><p class="v" style="right:351px;top:654px">100</p>
<svg class="i g" style="left:1577px;top:655px;width:16px;height:16px;fill:#999"><use href="#plus"/></svg><p class="s" style="left:1596px;top:655px">Выдать</p>
<p class="lb2" style="left:1266px;top:685px">Лут</p>
<div class="inp" style="left:1269px;top:706px;width:242px"></div><p class="v" style="left:1271px;top:709px;color:#555">ИД предметов через запятую</p>
<div class="inp" style="left:1517px;top:706px;width:54px"></div><p class="v" style="left:1522px;top:710px">1</p>
<div class="b" style="left:1558px;top:711px;border-left:4px solid transparent;border-right:4px solid transparent;border-bottom:5px solid #111"></div>
<div class="b" style="left:1558px;top:720px;border-left:4px solid transparent;border-right:4px solid transparent;border-top:5px solid #111"></div>
<svg class="i g" style="left:1577px;top:710px;width:16px;height:16px;fill:#999"><use href="#plus"/></svg><p class="s" style="left:1596px;top:710px">Выдать</p>
<p class="lb2" style="left:1266px;top:738px">Транспорт</p>
<div class="inp" style="left:1269px;top:759px;width:302px"></div><p class="v" style="left:1271px;top:762px">5</p>
<svg class="i g" style="left:1577px;top:763px;width:16px;height:16px;fill:#999"><use href="#plus"/></svg><p class="s" style="left:1596px;top:763px">Выдать</p>
<div class="ft" style="left:1259px;top:824px;width:396px"></div>
<div class="c" style="left:1628px"><svg viewBox="0 0 10 10"><path d="M2 4l3 3 3-3"/></svg></div>

<!-- Right column -->
<div class="b" style="left:1665px;top:23px;width:255px;height:810px;background:#333"></div>
<div class="b" style="left:1665px;top:23px;width:255px;height:21px;background:#2e2e2e"></div>
<div class="b" style="left:1665px;top:115px;width:255px;height:22px;background:#2e2e2e"></div>
<p style="left:1665px;width:255px;text-align:center;top:28px;font-size:15px;font-weight:bold;color:#ddd">Игрок</p>
<p class="v" style="left:1671px;top:48px">Mr.Shadou</p>
<p class="v" style="left:1671px;top:72px">agat84</p>
<p class="v" style="left:1671px;top:96px">76561198384139999</p>
<svg class="i" style="left:1898px;top:97px;width:16px;height:16px;fill:#777"><use href="#plus"/></svg>
<p style="left:1665px;width:255px;text-align:center;top:120px;font-size:15px;font-weight:bold;color:#ddd">Игроки-online</p>
<div class="b" style="left:1665px;top:317px;width:255px;height:30px;background:#666"></div>
<p class="lb" style="left:1668px;top:136px;font-size:12px;letter-spacing:.2px">Expert1337 (Expert13372284200)</p><p class="s" style="left:1667px;top:151px">Пинг: 215</p><p class="s" style="right:4px;top:151px">ID: 76561198366549870</p>
<p class="lb" style="left:1668px;top:166px;font-size:12px;letter-spacing:.2px">valuxa1984 (MaXiMuS)</p><p class="s" style="left:1667px;top:181px">Пинг: 55</p><p class="s" style="right:4px;top:181px">ID: 76561198315561906</p>
<p class="lb" style="left:1668px;top:196px;font-size:12px;letter-spacing:.2px">Dmitriy (BisonbonasusPlay)</p><p class="s" style="left:1667px;top:211px">Пинг: 93</p><p class="s" style="right:4px;top:211px">ID: 76561198265247601</p>
<p class="lb" style="left:1668px;top:226px;font-size:12px;letter-spacing:.2px">Mr.Shadou (agat84)</p><p class="s" style="left:1667px;top:241px">Пинг: 84</p><p class="s" style="right:4px;top:241px">ID: 76561198384139999</p>
<p class="lb" style="left:1668px;top:256px;font-size:12px;letter-spacing:.2px">Junumehup (dexter.mixer)</p><p class="s" style="left:1667px;top:271px">Пинг: 32</p><p class="s" style="right:4px;top:271px">ID: 76561198444929071</p>
<p class="lb" style="left:1668px;top:286px;font-size:12px;letter-spacing:.2px">tolik (tolikoleshki)</p><p class="s" style="left:1667px;top:301px">Пинг: 98</p><p class="s" style="right:4px;top:301px">ID: 76561198430964141</p>
<p class="lb" style="left:1668px;top:316px;font-size:12px;letter-spacing:.2px">СаТаНа (СаТаНа)</p><p class="s" style="left:1667px;top:331px">Пинг: 84</p><p class="s" style="right:4px;top:331px">ID: 76561198394671484</p>
<div class="b" style="left:1665px;top:833px;width:255px;height:32px;background:#444"></div>
<p class="lb2" style="left:1668px;top:841px;font-size:13px;letter-spacing:.15px;color:#bbb">Кол-во игроков: 7/24</p>
<svg class="i" style="left:1900px;top:841px;width:16px;height:16px;fill:#777"><use href="#cached"/></svg>

<!-- Logs -->
<div class="b" style="left:40px;top:863px;width:1625px;height:3px;background:#404040"></div>
<div class="b" style="left:40px;top:866px;width:1880px;height:144px;background:#353535"></div>
<div class="b" style="left:645px;top:866px;width:1.500px;height:144px;background:#4a4a4a"></div>
<div class="b" style="left:1351px;top:866px;width:1.500px;height:144px;background:#4a4a4a"></div>
<div class="lg">
<p class="s" style="left:40.500px;top:871px">Сегодня в 17:32:47</p><p class="q" style="left:160px;top:871px">Successfully gave Expert13372284200 17663 x1!</p>
<p class="s" style="left:40.500px;top:896px">Сегодня в 17:30:38</p><p class="q" style="left:160px;top:896px">Successfully gave Expert13372284200 17652 x1!</p>
<p class="s" style="left:40.500px;top:921px">Сегодня в 17:29:55</p><p class="q" style="left:160px;top:921px">Successfully gave Expert13372284200 17649 x1!</p>
<p class="s" style="left:40.500px;top:946px">Сегодня в 17:27:02</p><p class="q" style="left:160px;top:946px">Successfully gave Expert13372284200 17645 x1!</p>
<p class="s" style="left:40.500px;top:971px">Сегодня в 17:25:10</p><p class="q" style="left:160px;top:971px">Successfully gave Expert13372284200 17643 x1!</p>
<p class="s" style="left:40.500px;top:995px">Сегодня в 17:24:21</p><p class="q" style="left:160px;top:995px">Successfully gave agat84 5!</p>
<p class="s" style="left:648.500px;top:871px">Сегодня в 17:34:46</p><p class="q" style="left:769px;top:871px">[World] tolik [tolikoleshki]: "жыви со мной"</p>
<p class="s" style="left:648.500px;top:896px">Сегодня в 17:34:45</p><p class="q" style="left:769px;top:896px">MessageAnnouncer &gt;&gt; vk.com/unturned_hgm - цены на премиум, VIP и другие услуги смотрите в группе!</p>
<p class="s" style="left:648.500px;top:921px">Сегодня в 17:34:45</p><p class="q" style="left:769px;top:917px">MessageAnnouncer &gt;&gt; Broadcast: vk.com/unturned_hgm - цены на премиум, VIP и другие услуги смотрите в гру...</p>
<p class="s" style="left:648.500px;top:946px">Сегодня в 17:34:44</p><p class="q" style="left:769px;top:946px">[World] Expert1337 [Expert13372284200]: "эх..."</p>
<p class="s" style="left:648.500px;top:971px">Сегодня в 17:34:43</p><p class="q" style="left:769px;top:971px">ServerControl &gt;&gt; VALUE NOW [1] [0] [362]</p>
<p class="s" style="left:648.500px;top:995px">Сегодня в 17:34:43</p><p class="q" style="left:769px;top:995px">Client has executed command "GET NOW"</p>
<p class="s" style="left:1355px;top:871px">Сегодня в 17:29:07</p><p class="q" style="left:1475px;top:871px">Junumehup истёк кровью!</p>
<p class="s" style="left:1355px;top:896px">Сегодня в 17:26:09</p><p class="q" style="left:1475px;top:896px">Циско Рамон истёк кровью!</p>
</div>
<div class="b" style="left:40px;top:1010px;width:1880px;height:30px;background:#444"></div>
<p style="left:43px;top:1018px;font-size:16px;color:#585858">Напишите команду...</p>

<!-- Notification -->
<div class="b" style="left:1594px;top:910px;width:320px;height:36px;background:#292e36"></div>
<p style="left:1594px;width:320px;text-align:center;top:921px;font-size:13px;color:#5fd8c8">Скрыть все уведомления</p>
<div class="b" style="left:1594px;top:953px;width:320px;height:80px;background:#292e36"></div>
<div class="b" style="left:1603px;top:962px;width:62px;height:62px;border-radius:50%;background:#eca668"></div>
<p style="left:1603px;width:62px;text-align:center;top:982px;font-size:23px;line-height:26px;color:#fff">U</p>
<p style="left:1677px;top:962px;font-size:13px;font-weight:bold;color:#fff">UHGM</p>
<p style="left:1677px;top:985px;font-size:12.500px;color:#6a7078">СаТаНа: /sell 391</p>
<svg class="b" style="left:1893px;top:965px" width="10" height="10" stroke="#666" stroke-width="1.200"><path d="M0 0l10 10M10 0L0 10"/></svg>
</body></html>
